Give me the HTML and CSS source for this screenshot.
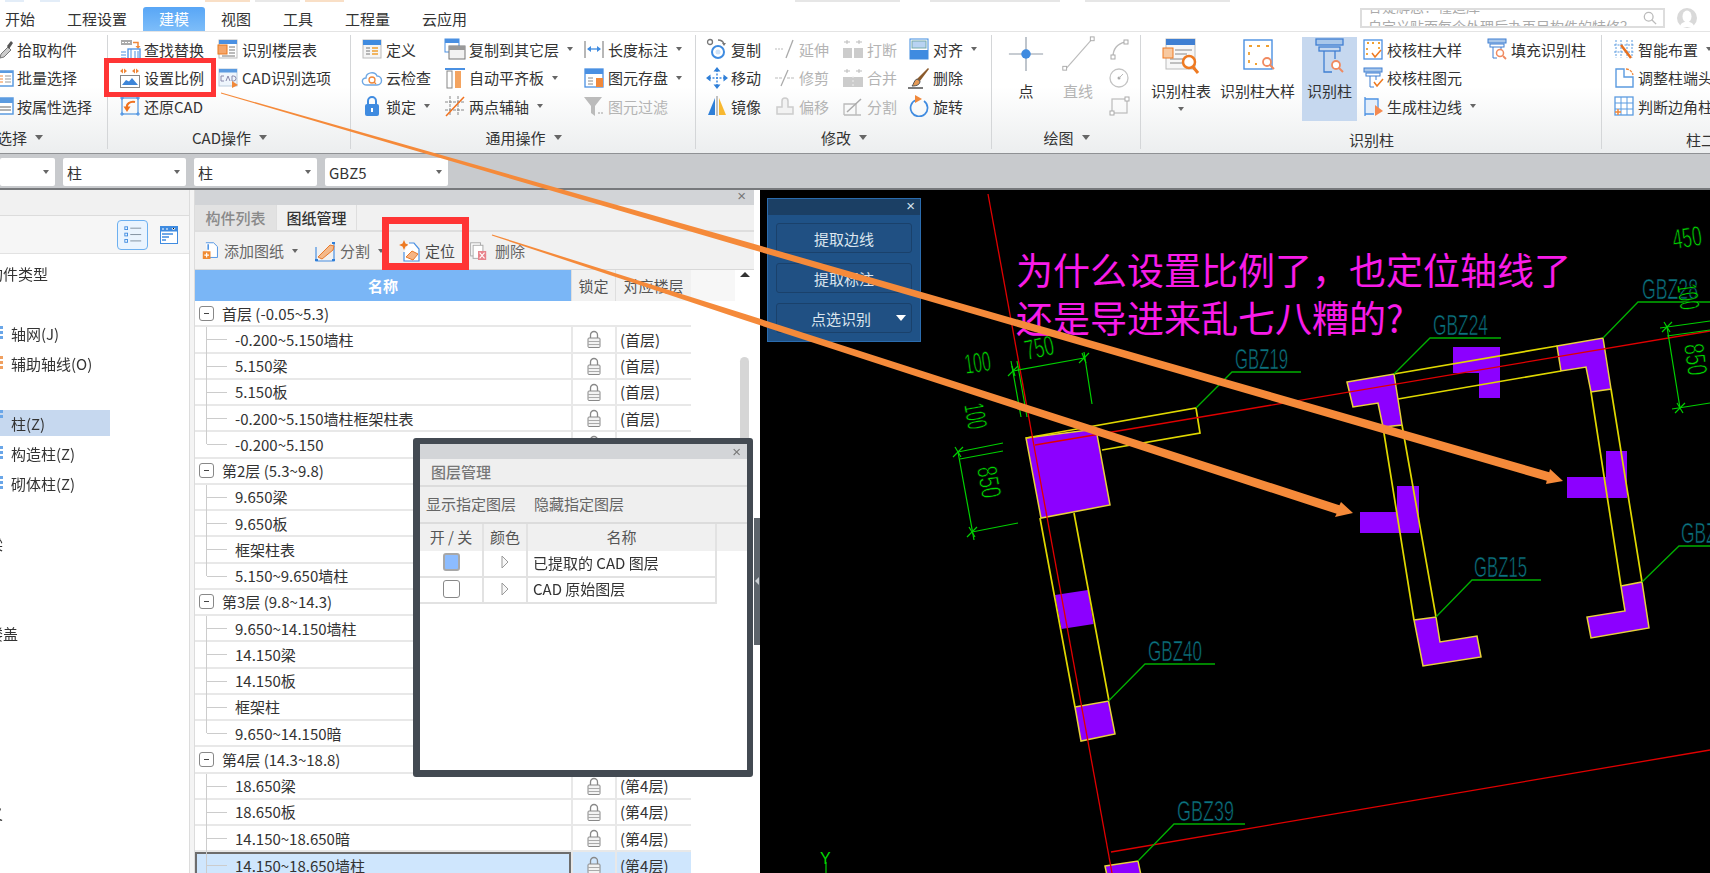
FILE: index.html
```html
<!DOCTYPE html>
<html lang="zh-CN">
<head>
<meta charset="utf-8">
<title>图纸管理</title>
<link rel="stylesheet" href="styles.css">
</head>
<body>
<svg class="sprite" width="0" height="0" aria-hidden="true">
  <defs>
    <symbol id="pick" viewBox="0 0 22 22"><path d="M8 20l1-4 7-7 3 3-7 7z" fill="#ccc" stroke="#777"/><path d="M15 8l4-5 2 2-4 6z" fill="#555"/></symbol>
    <symbol id="batch" viewBox="0 0 22 22"><rect x="5" y="4" width="16" height="15" fill="#fff" stroke="#5b9be0" stroke-width="1.5"/><path d="M5 5h16" stroke="#5b9be0" stroke-width="2"/><path d="M8 9h3M8 12h3M8 15h3" stroke="#f0883a"/><path d="M13 9h6M13 12h6M13 15h6" stroke="#999"/></symbol>
    <symbol id="attr" viewBox="0 0 22 22"><rect x="5" y="3" width="16" height="16" fill="#fff" stroke="#5b9be0" stroke-width="1.5"/><rect x="5" y="3" width="16" height="5" fill="#5b9be0"/><path d="M7 12h12M7 15h12" stroke="#999" stroke-width="1.5"/></symbol>
    <symbol id="find" viewBox="0 0 22 22"><rect x="2" y="2" width="11" height="5" fill="#aaa"/><path d="M3 4.500h9" stroke="#fff" stroke-dasharray="2 1"/><path d="M14 4.500h5v4" fill="none" stroke="#f0883a" stroke-width="1.500"/><path d="M16.500 8h5L19 11z" fill="#f0883a"/><rect x="9" y="11" width="12" height="10" fill="#fff" stroke="#4a90e2" stroke-width="1.300"/><path d="M2 14h5M2 17h5M2 20h5M12 11v10M16 13v7M19 13v7" stroke="#4a90e2"/></symbol>
    <symbol id="scale" viewBox="0 0 22 22"><path d="M1 4l3-2.500v5zM8 4L5 1.500v5zM13 4l3-2.500v5zM20 4l-3-2.500v5z" fill="#f0883a"/><rect x="1.500" y="8.500" width="19" height="12" fill="#fff" stroke="#888"/><path d="M3 18l4-5 3 1.500 3-3.500 6 7z" fill="#3d85d8"/></symbol>
    <symbol id="restore" viewBox="0 0 22 22"><rect x="3" y="3" width="16" height="16" fill="none" stroke="#5b9be0" stroke-width="1.300"/><path d="M1 3h4M3 1v4M17 3h4M19 1v4M1 19h4M3 17v4M17 19h4M19 17v4" stroke="#4a90e2"/><path d="M16 7c-5-1-9 2-8 6" fill="none" stroke="#f0711e" stroke-width="2"/><path d="M4.500 11.500h7L8 17z" fill="#f0711e"/></symbol>
    <symbol id="floor" viewBox="0 0 22 22"><rect x="2" y="2" width="18" height="18" fill="#fff" stroke="#bbb"/><rect x="2" y="2" width="18" height="4" fill="#4a90e2"/><rect x="1" y="7" width="9" height="9" fill="#f5a66a" stroke="#e8791f"/><path d="M12 9h6M12 12h6M12 15h6M5 18h13" stroke="#777"/></symbol>
    <symbol id="cadopt" viewBox="0 0 22 22"><rect x="2" y="2" width="18" height="17" fill="#eef5fc" stroke="#bcd"/><rect x="2" y="2" width="18" height="3.500" fill="#5b9be0"/><path d="M4 9h3M4 9v5h3M9 14l2-5 2 5M15 9v5h1.500a2.500 2.500 0 0 0 0-5z" fill="none" stroke="#88a"/><path d="M15 14l6 4-6 3z" fill="#f0883a"/></symbol>
    <symbol id="define" viewBox="0 0 22 22"><rect x="2" y="2" width="18" height="18" fill="#f5f5f5" stroke="#bbb"/><rect x="2" y="2" width="18" height="5" fill="#3f8be0"/><path d="M5 10h4M5 13h4M5 16h4" stroke="#777"/><path d="M11 10h6M11 13h6M11 16h6" stroke="#f0a030" stroke-width="1.500"/></symbol>
    <symbol id="cloud" viewBox="0 0 22 22"><path d="M6 18c-6 0-6-7-1-7 0-6 9-7 11-2 6 0 6 9 0 9z" fill="#fff" stroke="#6fa8e4" stroke-width="1.400"/><circle cx="11" cy="13" r="3" fill="none" stroke="#f0883a" stroke-width="1.300"/><path d="M13 15l2 2" stroke="#f0883a" stroke-width="1.300"/></symbol>
    <symbol id="lockb" viewBox="0 0 22 22"><path d="M7 10V6a4 4 0 0 1 8 0v4" fill="none" stroke="#3f8be0" stroke-width="2"/><rect x="4" y="9" width="14" height="12" rx="2" fill="#3f8be0"/><rect x="10" y="13" width="2" height="4" fill="#fff"/></symbol>
    <symbol id="copyf" viewBox="0 0 22 22"><rect x="1" y="1" width="14" height="13" fill="#fff" stroke="#4a90e2"/><rect x="1" y="1" width="14" height="4" fill="#4a90e2"/><rect x="5" y="8" width="16" height="13" fill="#f2f2f2" stroke="#777"/><rect x="5" y="8" width="16" height="4" fill="#999"/></symbol>
    <symbol id="alignp" viewBox="0 0 22 22"><path d="M1 2h20" stroke="#4a90e2" stroke-width="2"/><rect x="3" y="4" width="5" height="17" fill="#fff" stroke="#888"/><rect x="11" y="4" width="6" height="17" fill="#f4a460"/></symbol>
    <symbol id="twop" viewBox="0 0 22 22"><path d="M6 1v20M14 1v20M1 7h20M1 15h20" stroke="#888" stroke-dasharray="3 1"/><path d="M2 21L20 2" stroke="#f0711e" stroke-width="1.500"/></symbol>
    <symbol id="dimi" viewBox="0 0 22 22"><path d="M2 3v17M20 3v17" stroke="#888" stroke-width="1.200"/><path d="M5 11h12" stroke="#3f8be0" stroke-width="1.300"/><path d="M4 11l4-3v6zM18 11l-4-3v6z" fill="#3f8be0"/></symbol>
    <symbol id="savei" viewBox="0 0 22 22"><rect x="2" y="2" width="18" height="18" fill="#fff" stroke="#4a90e2" stroke-width="1.300"/><rect x="2" y="2" width="18" height="5" fill="#4a90e2"/><path d="M5 11h5M5 14h5M5 17h5" stroke="#888"/><rect x="13" y="11" width="7" height="9" fill="#f0883a"/></symbol>
    <symbol id="filter" viewBox="0 0 22 22"><path d="M1 2h18l-7 9v10l-4-3v-7z" fill="#bbb"/><path d="M15 18h2M18 18h2" stroke="#ccc" stroke-width="2"/></symbol>
    <symbol id="copy" viewBox="0 0 22 22"><circle cx="4" cy="4" r="2.500" fill="none" stroke="#777" stroke-width="1.300"/><path d="M12 2c3 0 5 1 6 4" fill="none" stroke="#777" stroke-width="1.300"/><path d="M16 5l4 0-2 3z" fill="#777"/><circle cx="12" cy="14" r="6" fill="none" stroke="#3f8be0" stroke-width="2"/><circle cx="12" cy="14" r="2.500" fill="#cfe2f7"/></symbol>
    <symbol id="move" viewBox="0 0 22 22"><path d="M11 3v16M3 11h16" stroke="#3f8be0" stroke-width="1.500" stroke-dasharray="2 1.500"/><path d="M11 0l-3.500 4.500h7zM11 22l-3.500-4.500h7zM0 11l4.500-3.500v7zM22 11l-4.500-3.500v7z" fill="#2f7fd8"/></symbol>
    <symbol id="mirror" viewBox="0 0 22 22"><path d="M9 3L2 20h7z" fill="#2f7fd8"/><path d="M13 3l7 17h-7z" fill="#f8b830"/><path d="M11 1v20" stroke="#888"/></symbol>
    <symbol id="extend" viewBox="0 0 22 22"><path d="M1 11h8" stroke="#bbb" stroke-dasharray="2 1"/><path d="M12 20L19 2" stroke="#aaa" stroke-width="1.300"/></symbol>
    <symbol id="trim" viewBox="0 0 22 22"><path d="M1 11h8M13 11h8" stroke="#bbb" stroke-dasharray="3 1"/><path d="M7 19L14 3" stroke="#aaa" stroke-width="1.300"/></symbol>
    <symbol id="offset" viewBox="0 0 22 22"><path d="M8 12V6a3 3 0 0 1 6 0v6h5v7H3v-7z" fill="#f2f2f2" stroke="#ccc" stroke-width="1.500"/></symbol>
    <symbol id="breaki" viewBox="0 0 22 22"><path d="M5 2v4M2 4h6M17 2v4M14 4h6" stroke="#bbb"/><rect x="1" y="10" width="9" height="10" fill="#ccc"/><rect x="12" y="10" width="9" height="10" fill="#ccc"/></symbol>
    <symbol id="merge" viewBox="0 0 22 22"><path d="M5 2v4M2 4h6M17 2v4M14 4h6" stroke="#bbb"/><rect x="1" y="10" width="20" height="10" fill="#ccc"/><path d="M11 9v12" stroke="#eee" stroke-dasharray="2 2"/></symbol>
    <symbol id="splitg" viewBox="0 0 22 22"><path d="M2 20h17M2 20V9h12v11" fill="none" stroke="#bbb" stroke-width="1.300"/><path d="M5 17L19 4" stroke="#aaa" stroke-width="1.500"/></symbol>
    <symbol id="alignr" viewBox="0 0 22 22"><rect x="2" y="1" width="18" height="20" fill="#fff" stroke="#3f8be0"/><rect x="4" y="3" width="14" height="7" fill="#b8d3f2" stroke="#7aa"/><rect x="2" y="12" width="18" height="9" fill="#3f8be0"/></symbol>
    <symbol id="erase" viewBox="0 0 22 22"><path d="M20 1l1 1-9 12-3-2z" fill="#8b5a2b"/><path d="M9 12l3 2c0 3-2 5-8 5 2-2 2-6 5-7z" fill="#e69a55" stroke="#555"/><path d="M0 21h15" stroke="#333" stroke-width="1.300"/></symbol>
    <symbol id="rotate" viewBox="0 0 22 22"><path d="M8 5a8.500 8.500 0 1 0 8 1" fill="none" stroke="#3f8be0" stroke-width="1.700"/><path d="M7 0l7 4-7 4z" fill="#f0883a"/></symbol>
    <symbol id="ptbig" viewBox="0 0 40 40"><path d="M20 2v36M2 20h36" stroke="#8f9aa6" stroke-width="1.200"/><circle cx="20" cy="20" r="5" fill="#3f8be0"/></symbol>
    <symbol id="lnbig" viewBox="0 0 40 40"><path d="M7 36L35 4" stroke="#bbb" stroke-width="1.200"/><rect x="4" y="33" width="4" height="4" fill="#fff" stroke="#aaa"/><rect x="33" y="2" width="4" height="4" fill="#fff" stroke="#aaa"/></symbol>
    <symbol id="arc" viewBox="0 0 22 22"><path d="M5 19C5 11 9 6 17 4" fill="none" stroke="#bbb" stroke-width="1.300"/><rect x="3" y="17" width="4" height="4" fill="#fff" stroke="#aaa"/><rect x="16" y="2" width="4" height="4" fill="#fff" stroke="#aaa"/></symbol>
    <symbol id="circ" viewBox="0 0 22 22"><circle cx="11" cy="11" r="9" fill="none" stroke="#c4c4c4" stroke-width="1.300"/><circle cx="11" cy="11" r="1.500" fill="#aaa"/><path d="M11 11l4-4" stroke="#bbb"/></symbol>
    <symbol id="rc" viewBox="0 0 22 22"><rect x="4" y="4" width="15" height="14" fill="none" stroke="#bbb" stroke-width="1.200"/><rect x="2" y="16" width="4" height="4" fill="#fff" stroke="#aaa"/><rect x="17" y="2" width="4" height="4" fill="#fff" stroke="#aaa"/></symbol>
    <symbol id="cbtable" viewBox="0 0 40 36"><rect x="5" y="1" width="29" height="30" fill="#f7f7f7" stroke="#bbb"/><rect x="5" y="1" width="29" height="6" fill="#3f7fd2"/><path d="M14 12h17M14 16h12M9 21h13M9 25h12" stroke="#888"/><rect x="2" y="10" width="10" height="10" fill="#f8c9a0" stroke="#ee7a22"/><circle cx="28" cy="24" r="6" fill="#fff" stroke="#ee7a22" stroke-width="2.500"/><path d="M32 29l5 6" stroke="#ee7a22" stroke-width="3"/></symbol>
    <symbol id="cbdetail" viewBox="0 0 40 36"><rect x="6" y="2" width="28" height="29" fill="#fff" stroke="#4a90e2" stroke-width="1.400"/><path d="M11 8h3M19 8h3M28 8h3M11 14v3M11 22v3M17 26h2" stroke="#f0a030" stroke-width="1.800"/><circle cx="29" cy="24" r="4" fill="#fff" stroke="#f08a60" stroke-width="1.800"/><path d="M32 27l4 4" stroke="#f08a60" stroke-width="2"/></symbol>
    <symbol id="cbcol" viewBox="0 0 40 36"><rect x="6" y="1" width="27" height="6" fill="#a9c7ea" stroke="#3f7fd2" stroke-width="1.300"/><rect x="9" y="9" width="21" height="4" fill="none" stroke="#3f7fd2" stroke-width="1.300"/><path d="M14 13v21h8" fill="none" stroke="#3f7fd2" stroke-width="1.300"/><path d="M25 13v8" stroke="#3f7fd2" stroke-width="1.300"/><circle cx="26" cy="27" r="4" fill="#fff" stroke="#f08a60" stroke-width="1.800"/><path d="M29 30l4 4" stroke="#f08a60" stroke-width="2"/></symbol>
    <symbol id="chkd" viewBox="0 0 22 22"><rect x="2" y="2" width="18" height="19" fill="#fff" stroke="#4a90e2" stroke-width="1.300"/><path d="M5 5h2M10 5h2M16 5h2M5 10v2M17 9v2M5 15v2" stroke="#f0a030" stroke-width="1.800"/><path d="M10 15l3 4 6-7" fill="none" stroke="#ee7a22" stroke-width="1.500"/></symbol>
    <symbol id="chkc" viewBox="0 0 22 22"><rect x="2" y="1" width="18" height="4" fill="#a9c7ea" stroke="#3f7fd2"/><rect x="4" y="6" width="14" height="3" fill="none" stroke="#3f7fd2"/><path d="M8 9v11h4M14 9v4" fill="none" stroke="#3f7fd2"/><path d="M12 15l3 4 6-7" fill="none" stroke="#ee7a22" stroke-width="1.500"/></symbol>
    <symbol id="gen" viewBox="0 0 22 22"><path d="M3 2v19M3 4h13v9M3 19h9" fill="none" stroke="#4a90e2" stroke-width="1.300"/><rect x="4" y="5" width="11" height="13" fill="#e4eefa"/><path d="M13 10l8 6-8 5z" fill="#f58a50"/></symbol>
    <symbol id="fillc" viewBox="0 0 22 22"><rect x="2" y="1" width="18" height="4" fill="#a9c7ea" stroke="#3f7fd2"/><rect x="4" y="6" width="14" height="3" fill="none" stroke="#3f7fd2"/><path d="M7 9v11h4M15 9v3" fill="none" stroke="#3f7fd2"/><circle cx="14" cy="15" r="3.500" fill="#fff" stroke="#f08a60" stroke-width="1.500"/><path d="M17 18l3 3" stroke="#f08a60" stroke-width="1.800"/></symbol>
    <symbol id="smart" viewBox="0 0 22 22"><path d="M3 2v18M8 2v18M14 2v18M19 2v18M1 7h20M1 14h20" stroke="#5b9be0" stroke-dasharray="2 1.500"/><path d="M8 7l10 13" stroke="#e8701f" stroke-width="2.500"/></symbol>
    <symbol id="adjust" viewBox="0 0 22 22"><path d="M3 2v18h17V10h-9V2z" fill="#fff" stroke="#5b9be0" stroke-width="1.400"/><path d="M13 2c3 0 6 2 7 6" fill="none" stroke="#f0883a" stroke-width="1.300" stroke-dasharray="3 1"/></symbol>
    <symbol id="corner" viewBox="0 0 22 22"><rect x="2" y="2" width="18" height="18" fill="#fff" stroke="#5b9be0" stroke-width="1.300"/><path d="M8 2v18M14 2v18M2 8h18M2 14h18" stroke="#5b9be0"/><path d="M2 17h6M5 14v6" stroke="#f0883a" stroke-width="1.500"/></symbol>
    <symbol id="adddoc" viewBox="0 0 22 22"><path d="M5 1h10l5 5v14H8" fill="#fff" stroke="#4a90e2" stroke-width="1.200"/><path d="M8 3v7" stroke="#4a90e2" stroke-width="2"/><rect x="1" y="12" width="10" height="10" fill="#f08a30"/><path d="M6 14v6M3 17h6" stroke="#fff" stroke-width="1.500"/></symbol>
    <symbol id="splitd" viewBox="0 0 22 22"><path d="M2 7v14h18V4" fill="none" stroke="#4a90e2" stroke-width="1.200"/><path d="M4 17L16 5l4 1-1 4-11 9z" fill="#f4b98a" stroke="#e8792a"/><path d="M1 20h3M18 20h3M18 3h3" stroke="#2f7fd8" stroke-width="2"/></symbol>
    <symbol id="locate" viewBox="0 0 22 22"><path d="M5 0l1.500 3.500L10 5 6.500 6.500 5 10 3.500 6.500 0 5l3.500-1.500z" fill="#ee7a22"/><path d="M10 3h5l5 6v12H5v-9" fill="#fff" stroke="#4a90e2" stroke-width="1.200"/><path d="M7 17l6-6 6 3-5 6z" fill="#f6b484" stroke="#e8792a"/></symbol>
    <symbol id="deld" viewBox="0 0 22 22"><rect x="2" y="1" width="12" height="16" fill="#fff" stroke="#aaa" stroke-width="1.200"/><rect x="5" y="4" width="12" height="16" fill="#fff" stroke="#aaa" stroke-width="1.200"/><rect x="11" y="11" width="10" height="11" fill="#e8848c"/><path d="M13 13l6 7M19 13l-6 7" stroke="#fff" stroke-width="1.300"/></symbol>
    <symbol id="lock" viewBox="0 0 14 18"><path d="M3.500 8V5a3.500 3.500 0 0 1 7 0v3" fill="none" stroke="#888" stroke-width="1.300"/><rect x="1" y="8" width="12" height="9.500" rx="1" fill="#f2f2f2" stroke="#888"/><path d="M1 11.500h12M1 14.500h12" stroke="#aaa"/></symbol>
    <symbol id="listi" viewBox="0 0 22 22"><rect x="2" y="2" width="3" height="3" fill="none" stroke="#3f8be0"/><rect x="2" y="9" width="3" height="3" fill="none" stroke="#3f8be0"/><rect x="2" y="16" width="3" height="3" fill="none" stroke="#3f8be0"/><path d="M8 3.500h12M8 10.500h12M8 17.500h12" stroke="#7a8a99"/></symbol>
    <symbol id="gridi" viewBox="0 0 18 18"><rect x="0.500" y="0.500" width="17" height="17" fill="#fff" stroke="#3f8be0"/><rect x="0.500" y="0.500" width="17" height="5" fill="#3f8be0"/><path d="M3 2v2M7 2v2M12 2l1.500 2L15 2" stroke="#fff"/><path d="M2 8h11M2 11h7M2 14h4" stroke="#3f8be0" stroke-width="1.300"/></symbol>
    <symbol id="tri" viewBox="0 0 8 14"><path d="M1 1l6 6-6 6z" fill="#f8f8f8" stroke="#999"/></symbol>
    <symbol id="mag" viewBox="0 0 16 16"><circle cx="6.500" cy="6.500" r="5" fill="none" stroke="#bbb" stroke-width="1.500"/><path d="M10 10l5 5" stroke="#bbb" stroke-width="1.500"/></symbol>
    <symbol id="user" viewBox="0 0 20 20"><circle cx="10" cy="10" r="10" fill="#d9d9d9"/><ellipse cx="10" cy="8.500" rx="4.500" ry="6" fill="#fff"/><path d="M3 19c1-5 4-5 7-5s6 0 7 5z" fill="#fff"/></symbol>
  </defs>
</svg>

<div class="app">
  <div class="titlebar">
    <div class="tabs">
      <span class="tab">开始</span>
      <span class="tab">工程设置</span>
      <span class="tab active">建模</span>
      <span class="tab">视图</span>
      <span class="tab">工具</span>
      <span class="tab">工程量</span>
      <span class="tab">云应用</span>
    </div>
    <div class="search">
      <div class="search-text">
        <div>答疑解惑！懂造库</div>
        <div>自定义贴面每个处理后办再目构件的特修？</div>
      </div>
      <svg class="mag"><use href="#mag"/></svg>
    </div>
    <svg class="avatar"><use href="#user"/></svg>
  </div>

  <div class="ribbon">
    <section class="group g1">
      <div class="gbody">
        <div class="ri"><svg><use href="#pick"/></svg>拾取构件</div>
        <div class="ri"><svg><use href="#batch"/></svg>批量选择</div>
        <div class="ri"><svg><use href="#attr"/></svg>按属性选择</div>
      </div>
      <div class="glabel">选择<i class="caret"></i></div>
    </section>
    <section class="group g2">
      <div class="gbody">
        <div class="ri"><svg><use href="#find"/></svg>查找替换</div>
        <div class="ri"><svg><use href="#scale"/></svg>设置比例</div>
        <div class="ri"><svg><use href="#restore"/></svg>还原CAD</div>
        <div class="ri"><svg><use href="#floor"/></svg>识别楼层表</div>
        <div class="ri"><svg><use href="#cadopt"/></svg>CAD识别选项</div>
      </div>
      <div class="glabel">CAD操作<i class="caret"></i></div>
    </section>
    <section class="group g3">
      <div class="gbody">
        <div class="ri"><svg><use href="#define"/></svg>定义</div>
        <div class="ri"><svg><use href="#cloud"/></svg>云检查</div>
        <div class="ri"><svg><use href="#lockb"/></svg>锁定<i class="caret"></i></div>
        <div class="ri"><svg><use href="#copyf"/></svg>复制到其它层<i class="caret"></i></div>
        <div class="ri"><svg><use href="#alignp"/></svg>自动平齐板<i class="caret"></i></div>
        <div class="ri"><svg><use href="#twop"/></svg>两点辅轴<i class="caret"></i></div>
        <div class="ri"><svg><use href="#dimi"/></svg>长度标注<i class="caret"></i></div>
        <div class="ri"><svg><use href="#savei"/></svg>图元存盘<i class="caret"></i></div>
        <div class="ri off"><svg><use href="#filter"/></svg>图元过滤</div>
      </div>
      <div class="glabel">通用操作<i class="caret"></i></div>
    </section>
    <section class="group g4">
      <div class="gbody">
        <div class="ri"><svg><use href="#copy"/></svg>复制</div>
        <div class="ri"><svg><use href="#move"/></svg>移动</div>
        <div class="ri"><svg><use href="#mirror"/></svg>镜像</div>
        <div class="ri off"><svg><use href="#extend"/></svg>延伸</div>
        <div class="ri off"><svg><use href="#trim"/></svg>修剪</div>
        <div class="ri off"><svg><use href="#offset"/></svg>偏移</div>
        <div class="ri off"><svg><use href="#breaki"/></svg>打断</div>
        <div class="ri off"><svg><use href="#merge"/></svg>合并</div>
        <div class="ri off"><svg><use href="#splitg"/></svg>分割</div>
        <div class="ri"><svg><use href="#alignr"/></svg>对齐<i class="caret"></i></div>
        <div class="ri"><svg><use href="#erase"/></svg>删除</div>
        <div class="ri"><svg><use href="#rotate"/></svg>旋转</div>
      </div>
      <div class="glabel">修改<i class="caret"></i></div>
    </section>
    <section class="group g5">
      <div class="gbody">
        <div class="big"><svg class="draw-ico"><use href="#ptbig"/></svg><span>点</span></div>
        <div class="big off"><svg class="draw-ico"><use href="#lnbig"/></svg><span>直线</span></div>
        <div class="ri solo"><svg><use href="#arc"/></svg></div>
        <div class="ri solo"><svg><use href="#circ"/></svg></div>
        <div class="ri solo"><svg><use href="#rc"/></svg></div>
      </div>
      <div class="glabel">绘图<i class="caret"></i></div>
    </section>
    <section class="group g6">
      <div class="gbody">
        <div class="big"><svg class="col-ico"><use href="#cbtable"/></svg><span>识别柱表</span><i class="caret center"></i></div>
        <div class="big"><svg class="col-ico"><use href="#cbdetail"/></svg><span>识别柱大样</span></div>
        <div class="big sel-block"><svg class="col-ico"><use href="#cbcol"/></svg><span>识别柱</span></div>
        <div class="ri"><svg><use href="#chkd"/></svg>校核柱大样</div>
        <div class="ri"><svg><use href="#chkc"/></svg>校核柱图元</div>
        <div class="ri"><svg><use href="#gen"/></svg>生成柱边线<i class="caret"></i></div>
        <div class="ri"><svg><use href="#fillc"/></svg>填充识别柱</div>
      </div>
      <div class="glabel low">识别柱</div>
    </section>
    <section class="group g7">
      <div class="gbody">
        <div class="ri"><svg><use href="#smart"/></svg>智能布置<i class="caret"></i></div>
        <div class="ri"><svg><use href="#adjust"/></svg>调整柱端头</div>
        <div class="ri"><svg><use href="#corner"/></svg>判断边角柱</div>
      </div>
      <div class="glabel low">柱二次编辑</div>
    </section>
  </div>

  <div class="selbar">
    <div class="sel first"><i class="caret"></i></div>
    <div class="sel"><span>柱</span><i class="caret"></i></div>
    <div class="sel"><span>柱</span><i class="caret"></i></div>
    <div class="sel"><span>GBZ5</span><i class="caret"></i></div>
  </div>

  <div class="main">
    <aside class="nav">
      <div class="nav-head"></div>
      <div class="nav-tools">
        <span class="view-btn"><svg><use href="#listi"/></svg></span>
        <svg class="grid-btn"><use href="#gridi"/></svg>
      </div>
      <div class="nav-list">
        <div class="nr clip-a">构件类型</div>
        <div class="nr"></div>
        <div class="nr"><i class="sliver blue"></i>轴网(J)</div>
        <div class="nr"><i class="sliver orange"></i>辅助轴线(O)</div>
        <div class="nr"></div>
        <div class="nr"><span class="nr-sel"><i class="sliver blue"></i>柱(Z)</span></div>
        <div class="nr"><i class="sliver blue"></i>构造柱(Z)</div>
        <div class="nr"><i class="sliver blue"></i>砌体柱(Z)</div>
        <div class="nr"></div>
        <div class="nr clip-b">圈梁</div>
        <div class="nr"></div>
        <div class="nr"></div>
        <div class="nr clip-a">楼盖</div>
        <div class="nr"></div>
        <div class="nr"></div>
        <div class="nr"></div>
        <div class="nr"></div>
        <div class="nr"></div>
        <div class="nr clip-a">义</div>
      </div>
    </aside>
    <div class="split"></div>
    <div class="mid">
      <div class="mid-head"><span class="x">×</span></div>
      <div class="mid-tabs">
        <span class="mtab">构件列表</span>
        <span class="mtab on">图纸管理</span>
      </div>
      <div class="mid-tools">
        <span class="mt t-add"><svg><use href="#adddoc"/></svg>添加图纸<i class="caret"></i></span>
        <span class="mt t-split"><svg><use href="#splitd"/></svg>分割<i class="caret"></i></span>
        <span class="mt t-loc"><svg><use href="#locate"/></svg>定位</span>
        <span class="mt t-del"><svg><use href="#deld"/></svg>删除</span>
      </div>
      <div class="thead">
        <span class="th name">名称</span>
        <span class="th">锁定</span>
        <span class="th">对应楼层</span>
        <span class="th blank"></span>
      </div>
      <div class="tbody">
        <div class="tr head"><span class="minus"></span>首层 (-0.05~5.3)</div>
        <div class="tr"><span class="c nm">-0.200~5.150墙柱</span><span class="c lk"><svg><use href="#lock"/></svg></span><span class="c fl">(首层)</span></div>
        <div class="tr"><span class="c nm">5.150梁</span><span class="c lk"><svg><use href="#lock"/></svg></span><span class="c fl">(首层)</span></div>
        <div class="tr"><span class="c nm">5.150板</span><span class="c lk"><svg><use href="#lock"/></svg></span><span class="c fl">(首层)</span></div>
        <div class="tr"><span class="c nm">-0.200~5.150墙柱框架柱表</span><span class="c lk"><svg><use href="#lock"/></svg></span><span class="c fl">(首层)</span></div>
        <div class="tr"><span class="c nm last">-0.200~5.150</span><span class="c lk"><svg><use href="#lock"/></svg></span><span class="c fl">(首层)</span></div>
        <div class="tr head"><span class="minus"></span>第2层 (5.3~9.8)</div>
        <div class="tr"><span class="c nm">9.650梁</span><span class="c lk"><svg><use href="#lock"/></svg></span><span class="c fl">(第2层)</span></div>
        <div class="tr"><span class="c nm">9.650板</span><span class="c lk"><svg><use href="#lock"/></svg></span><span class="c fl">(第2层)</span></div>
        <div class="tr"><span class="c nm">框架柱表</span><span class="c lk"><svg><use href="#lock"/></svg></span><span class="c fl">(第2层)</span></div>
        <div class="tr"><span class="c nm last">5.150~9.650墙柱</span><span class="c lk"><svg><use href="#lock"/></svg></span><span class="c fl">(第2层)</span></div>
        <div class="tr head"><span class="minus"></span>第3层 (9.8~14.3)</div>
        <div class="tr"><span class="c nm">9.650~14.150墙柱</span><span class="c lk"><svg><use href="#lock"/></svg></span><span class="c fl">(第3层)</span></div>
        <div class="tr"><span class="c nm">14.150梁</span><span class="c lk"><svg><use href="#lock"/></svg></span><span class="c fl">(第3层)</span></div>
        <div class="tr"><span class="c nm">14.150板</span><span class="c lk"><svg><use href="#lock"/></svg></span><span class="c fl">(第3层)</span></div>
        <div class="tr"><span class="c nm">框架柱</span><span class="c lk"><svg><use href="#lock"/></svg></span><span class="c fl">(第3层)</span></div>
        <div class="tr"><span class="c nm last">9.650~14.150暗</span><span class="c lk"><svg><use href="#lock"/></svg></span><span class="c fl">(第3层)</span></div>
        <div class="tr head"><span class="minus"></span>第4层 (14.3~18.8)</div>
        <div class="tr"><span class="c nm">18.650梁</span><span class="c lk"><svg><use href="#lock"/></svg></span><span class="c fl">(第4层)</span></div>
        <div class="tr"><span class="c nm">18.650板</span><span class="c lk"><svg><use href="#lock"/></svg></span><span class="c fl">(第4层)</span></div>
        <div class="tr"><span class="c nm">14.150~18.650暗</span><span class="c lk"><svg><use href="#lock"/></svg></span><span class="c fl">(第4层)</span></div>
        <div class="tr selected"><span class="c nm">14.150~18.650墙柱</span><span class="c lk"><svg><use href="#lock"/></svg></span><span class="c fl">(第4层)</span></div>
      </div>
      <i class="sb-up"></i>
      <i class="sb-thumb"></i>
    </div>

    <div class="canvas">
      <svg class="cad" viewBox="760 190 950 683" width="950" height="683" aria-label="CAD 图纸">
        <g fill="#8c00ff">
          <path d="M1453 347H1500V398H1479V373H1453Z"/>
          <path d="M1606 451H1627V498H1567V477H1606Z"/>
          <path d="M1397 486H1419V533H1360V512H1397Z"/>
          <path d="M1055 595L1088 590L1093.500 624L1061.500 629Z"/>
        </g>
        <g fill="#8c00ff" stroke="#e8d23a" stroke-width="1.500">
          <path d="M1026 438L1096 429L1110 505L1041 518Z"/>
          <path d="M1075 707L1108.500 701L1115 734L1081 741Z"/>
          <path d="M1105 866L1138 861L1142 880H1108Z"/>
          <path d="M1347 382L1394 374L1402 425L1383 427L1378 403L1353 407Z"/>
          <path d="M1557 346L1603 338L1611 389L1591 392L1586 367L1561 371Z"/>
          <path d="M1414 620L1436 617L1440 642L1477 636L1481 657L1423 666Z"/>
          <path d="M1621 586L1642 582L1649 628L1591 638L1587 617L1625 611Z"/>
        </g>
        <g fill="none" stroke="#e0d800" stroke-width="1.700">
          <path d="M1026 438L1196 408L1200 433L1102 450"/>
          <path d="M1040 518L1075 707M1074 513L1109 701"/>
          <path d="M1394 374L1557 346M1398 399L1561 371"/>
          <path d="M1383 427L1414 620M1402 425L1436 617"/>
          <path d="M1591 392L1621 586M1611 389L1642 582"/>
        </g>
        <g fill="none" stroke="#e00000" stroke-width="1.300">
          <path d="M988 194L1112 873"/>
          <path d="M1035 445L1710 331"/>
          <path d="M1111 852L1710 750"/>
        </g>
        <g fill="none" stroke="#00b000" stroke-width="1.300">
          <path d="M1196 408L1232 372H1301"/>
          <path d="M1394 374L1430 338H1501"/>
          <path d="M1603 338L1638 302H1710"/>
          <path d="M1108.500 701L1145 664H1215"/>
          <path d="M1436 617L1472 580H1541"/>
          <path d="M1642 582L1679 546H1710"/>
          <path d="M1138 861L1174 824H1245"/>
        </g>
        <g fill="none" stroke="#00d000" stroke-width="1.200">
          <path d="M1013 371L1084 358M1011 361L1021 417M1017 361L1027 417M1084 352L1092 404"/>
          <path d="M1008 376L1018 366M1012 366L1015 376M1079 363L1089 353M1082 353L1086 363"/>
          <path d="M958 452L974 540M958 452L1003 443M960 459L1003 451M972 532L1018 523"/>
          <path d="M953 457L963 447M955 447L961 457M967 537L977 527M969 527L975 537"/>
          <path d="M1667 327L1680 408M1660 328L1710 321M1667 336L1710 330M1672 409L1710 403"/>
          <path d="M1662 332L1672 322M1664 322L1670 332M1675 413L1685 403M1677 403L1683 413"/>
          <path d="M826 862L826 873"/>
        </g>
        <g class="lbl">
          <text x="1235" y="369" textLength="53" lengthAdjust="spacingAndGlyphs">GBZ19</text>
          <text x="1433" y="335" textLength="55" lengthAdjust="spacingAndGlyphs">GBZ24</text>
          <text x="1642" y="299" textLength="56" lengthAdjust="spacingAndGlyphs">GBZ28</text>
          <text x="1474" y="577" textLength="53" lengthAdjust="spacingAndGlyphs">GBZ15</text>
          <text x="1681" y="543" textLength="55" lengthAdjust="spacingAndGlyphs">GBZ26</text>
          <text x="1148" y="661" textLength="54" lengthAdjust="spacingAndGlyphs">GBZ40</text>
          <text x="1177" y="821" textLength="57" lengthAdjust="spacingAndGlyphs">GBZ39</text>
        </g>
        <g class="dim">
          <text transform="translate(966 374) rotate(-8)" textLength="26" lengthAdjust="spacingAndGlyphs">100</text>
          <text transform="translate(1027 360) rotate(-12)" textLength="29" lengthAdjust="spacingAndGlyphs">750</text>
          <text transform="translate(964 405) rotate(80)" textLength="26" lengthAdjust="spacingAndGlyphs">100</text>
          <text transform="translate(977 468) rotate(80)" textLength="32" lengthAdjust="spacingAndGlyphs">850</text>
          <text transform="translate(1674 249) rotate(-8)" textLength="29" lengthAdjust="spacingAndGlyphs">450</text>
          <text transform="translate(1677 285) rotate(82)" textLength="26" lengthAdjust="spacingAndGlyphs">100</text>
          <text transform="translate(1684 345) rotate(82)" textLength="32" lengthAdjust="spacingAndGlyphs">850</text>
          <text class="axis" x="820" y="864">Y</text>
        </g>
      </svg>
      <div class="float">
        <div class="float-head"><span>×</span></div>
        <div class="fbtn">提取边线</div>
        <div class="fbtn">提取标注</div>
        <div class="fbtn drop">点选识别<i class="caret white"></i></div>
      </div>
      <div class="note">为什么设置比例了，也定位轴线了<br>还是导进来乱七八糟的?</div>
    </div>

    <div class="dialog">
      <div class="dlg-head"><span class="x">×</span></div>
      <div class="dlg-title">图层管理</div>
      <div class="dlg-acts"><span>显示指定图层</span><span>隐藏指定图层</span></div>
      <div class="lt lhead"><span>开 / 关</span><span>颜色</span><span>名称</span></div>
      <div class="lt"><span><i class="cb on"></i></span><span><svg class="tri"><use href="#tri"/></svg></span><span class="ln">已提取的 CAD 图层</span></div>
      <div class="lt"><span><i class="cb"></i></span><span><svg class="tri"><use href="#tri"/></svg></span><span class="ln">CAD 原始图层</span></div>
    </div>
    <i class="handle"></i>
  </div>
</div>

<div class="hl hl-scale"></div>
<div class="hl hl-loc"></div>
<svg class="arrows" viewBox="0 0 1710 873" width="1710" height="873" aria-hidden="true">
  <path fill="#f58a3a" d="M221.100 92.500L752.600 243.500L1549.250 472.200L1550 469L1563 481L1546 484L1546.750 480.800L751 249.300L220.900 93.500Z"/>
  <path fill="#f58a3a" d="M492.200 234.500L746.700 314.500L1339.400 505.200L1341 502L1353 513L1335 517L1336.600 513.800L744.900 320.300L491.800 235.500Z"/>
</svg>
</body>
</html>
```

FILE: styles.css
```css
* { box-sizing: border-box; }
html, body { margin: 0; padding: 0; height: 100%; overflow: hidden; }
body {
  position: relative;
  width: 1710px;
  height: 873px;
  font-family: "Noto Sans CJK SC", "Noto Sans", sans-serif;
  font-size: 15px;
  color: #333;
  background: #fff;
}
i { font-style: normal; display: block; }
.sprite { position: absolute; }
.app { display: flex; flex-direction: column; width: 1710px; height: 873px; overflow: hidden; }

/* top strip: the window title is cropped to its last two rows */
.titlebar {
  height: 31px; display: flex; align-items: flex-end; flex: none;
  background-color: #fff;
  background-image: linear-gradient(90deg,
    transparent 5px, #e3edf8 5px, #e3edf8 24px, transparent 24px,
    transparent 40px, #e3edf8 40px, #e3edf8 60px, transparent 60px,
    transparent 205px, #f9dfc6 205px, #f9dfc6 250px, transparent 250px,
    transparent 255px, #e8e8e8 255px, #e8e8e8 300px, transparent 300px,
    transparent 305px, #f9dfc6 305px, #f9dfc6 344px, transparent 344px,
    transparent 795px, #e6e6e6 795px, #e6e6e6 900px, transparent 900px,
    transparent 930px, #e6e6e6 930px, #e6e6e6 1060px, transparent 1060px,
    transparent 1085px, #e6e6e6 1085px, #e6e6e6 1230px, transparent 1230px);
  background-size: 100% 2px;
  background-repeat: no-repeat;
}
.tabs { display: flex; margin-left: -11px; }
.tab { height: 24px; padding: 0 16px; line-height: 24px; white-space: nowrap; border-radius: 3px 3px 0 0; }
.tab.active { color: #fff; background: linear-gradient(#58a6f6, #7dbdf9); }
.search {
  position: relative; margin-left: auto; margin-bottom: 3px; width: 305px; height: 20px;
  border: 2px solid #ddd; overflow: hidden; background: #fff;
}
.search-text { margin-top: -14px; padding-left: 6px; line-height: 20px; font-size: 14px; color: #aaa; white-space: nowrap; }
.mag { position: absolute; right: 6px; top: 1px; width: 14px; height: 14px; }
.avatar { width: 20px; height: 20px; margin: 0 13px 3px 12px; }

/* ribbon */
.ribbon {
  height: 123px; flex: none; display: flex; overflow: hidden;
  border-top: 1px solid #e4e4e4; border-bottom: 1px solid #8f9194;
  background: linear-gradient(#fff 45%, #eceeef);
}
.group { flex: none; position: relative; display: flex; flex-direction: column; }
.group::after { content: ""; position: absolute; right: 0; top: 3px; bottom: 4px; width: 1px; background: #d4d6d8; }
.gbody { height: 89px; padding-top: 3px; display: grid; grid-auto-flow: column; grid-template-rows: repeat(3, 28.5px); }
.glabel { height: 32px; display: flex; align-items: center; justify-content: center; white-space: nowrap; }
.glabel .caret { border-left-width: 4.500px; border-right-width: 4.500px; border-top-width: 5px; }
.glabel.low { padding-top: 5px; }
.g1 { width: 108px; }
.g1 .gbody { margin-left: -8px; grid-template-columns: 116px; }
.g1 .glabel { justify-content: flex-start; margin-left: -3px; }
.g2 { width: 243px; }
.g2 .gbody { padding-left: 11px; grid-template-columns: 98px 120px; }
.g3 { width: 345px; }
.g3 .gbody { padding-left: 10px; grid-template-columns: 83px 139px 110px; }
.g4 { width: 296px; }
.g4 .gbody { padding-left: 10px; grid-template-columns: 68px 68px 66px 80px; }
.g5 { width: 149px; }
.g5 .gbody { grid-template-columns: 68px 36px 45px; }
.g6 { width: 461px; }
.g6 .gbody { padding-left: 10px; grid-template-columns: 60px 9px 75px 7px 55px 5px 124px 110px; }
.g7 { width: 108px; }
.g7::after { display: none; }
.g7 .gbody { padding-left: 11px; grid-template-columns: 200px; }
.g7 .glabel { justify-content: flex-start; padding-left: 84px; }

.ri { display: flex; align-items: center; white-space: nowrap; min-width: 0; }
.ri svg { width: 22px; height: 22px; margin-right: 3px; flex: none; }
.ri.off, .big.off { color: #b4b4b4; }
.ri.solo { justify-content: center; }
.ri.solo svg { margin: 0; }
.big { grid-row: 1 / 4; display: flex; flex-direction: column; align-items: center; white-space: nowrap; }
.big span { line-height: 20px; }
.draw-ico { width: 38px; height: 38px; margin-bottom: 8px; }
.col-ico { width: 40px; height: 36px; margin: 3px 0 7px; }
.g6 .big:nth-child(1) { grid-column: 1; }
.g6 .big:nth-child(2) { grid-column: 3; }
.g6 .big:nth-child(3) { grid-column: 5; }
.g6 .ri { grid-column: 7; }
.g6 .ri:last-child { grid-column: 8; grid-row: 1; }
.g6 .ri:nth-child(4) { grid-row: 1; }
.g6 .ri:nth-child(5) { grid-row: 2; }
.g6 .ri:nth-child(6) { grid-row: 3; }
.sel-block { background: #c6d8ef; margin-top: 2px; height: 84px; }
.sel-block .col-ico { margin-top: 1px; }

.caret { width: 0; height: 0; margin-left: 8px; border-left: 3.500px solid transparent; border-right: 3.500px solid transparent; border-top: 4px solid #666; flex: none; }
.caret.center { margin: 6px 0 0; }
.caret.white { border-top-color: #fff; border-left-width: 5px; border-right-width: 5px; border-top-width: 6px; }

/* select bar */
.selbar {
  height: 36px; flex: none; display: flex; gap: 8px; padding-top: 4px;
  background: #c8cacd; border-bottom: 2px solid #77797c;
}
.sel { width: 123px; height: 28px; background: #fff; display: flex; align-items: center; justify-content: space-between; padding: 0 6px 0 4px; border-radius: 2px; }
.sel.first { width: 55px; justify-content: flex-end; }
.sel .caret { margin: 0; }

/* main */
.main { flex: 1; display: flex; position: relative; min-height: 0; }
.nav { width: 190px; flex: none; background: #fff; border-right: 1px solid #dcdcdc; overflow: hidden; }
.nav-head { height: 26px; background: #f1f1f1; border-bottom: 1px solid #dcdcdc; }
.nav-tools { height: 38px; display: flex; align-items: center; justify-content: flex-end; padding-right: 11px; gap: 12px; background: #f6f6f6; border-bottom: 1px solid #e2e2e2; }
.view-btn { width: 31px; height: 30px; border: 1px solid #6db0f0; border-radius: 4px; background: #eaf4fe; display: flex; align-items: center; justify-content: center; }
.view-btn svg { width: 20px; height: 20px; }
.grid-btn { width: 18px; height: 18px; }
.nav-list { padding-top: 4px; }
.nr { height: 30px; position: relative; display: flex; align-items: center; padding-left: 11px; white-space: nowrap; }
.nr.clip-a { padding-left: 0; margin-left: -12px; }
.nr.clip-b { padding-left: 0; margin-left: -27px; }
.nr-sel { position: absolute; left: 0; top: 2px; width: 110px; height: 26px; display: flex; align-items: center; padding-left: 11px; background: #c6d8ef; }
.sliver { position: absolute; left: 0; top: 8px; width: 3px; height: 14px; }
.nr-sel .sliver { top: 0; height: 8px; }
.sliver.blue { background: repeating-linear-gradient(#6aa6e8 0 3px, transparent 3px 5px); }
.sliver.orange { background: repeating-linear-gradient(#f0a060 0 3px, transparent 3px 5px); }
.split { width: 5px; flex: none; background: #f4f4f4; border-right: 1px solid #dcdcdc; }

.mid { width: 559px; flex: none; position: relative; background: #fff; overflow: hidden; }
.mid-head { height: 15px; background: #d2d4d7; position: relative; }
.x { position: absolute; right: 8px; top: -3px; font: 15px/18px "Liberation Sans", sans-serif; color: #777; }
.mid-tabs { height: 27px; display: flex; background: #f1f1f1; border-bottom: 2px solid #dedede; }
.mtab { width: 81px; display: flex; align-items: center; justify-content: center; background: #e2e2e2; color: #8a8a8a; font-weight: 500; }
.mtab.on { background: #f1f1f1; color: #333; border-right: 1px solid #dedede; border-left: 1px solid #dedede; }
.mid-tools { height: 38px; display: flex; align-items: center; background: #f1f1f1; border-bottom: 1px solid #d8d8d8; color: #666; }
.mt { display: flex; align-items: center; white-space: nowrap; }
.mt svg { width: 22px; height: 22px; flex: none; margin-right: 4px; }
.t-add { margin-left: 7px; width: 112px; }
.t-add svg { width: 17px; height: 19px; margin-right: 5px; }
.t-split { width: 86px; }
.t-loc { width: 70px; margin-left: -1px; color: #4a4a4a; }
.t-del { color: #666; }
.t-del svg { width: 18px; height: 20px; margin-right: 8px; }
.thead { display: grid; grid-template-columns: 376px 44px 76px 44px; height: 31px; }
.th { display: flex; align-items: center; justify-content: center; background: #f1f1f1; border-left: 1px solid #dedede; color: #555; white-space: nowrap; }
.th.name { background: #7ab6f6; color: #fff; font-weight: 700; border: 0; }
.th.blank { background: #f7f7f7; border: 0; }
.tr { width: 496px; height: 26.250px; display: grid; grid-template-columns: 376px 44px 76px; border-bottom: 2px solid #e8e8e8; }
.tr.head { display: flex; align-items: center; padding-left: 4px; white-space: nowrap; }
.minus { width: 15px; height: 15px; margin-right: 8px; border: 1px solid #888; border-radius: 3px; position: relative; flex: none; background: #fff; }
.minus::after { content: ""; position: absolute; left: 4px; top: 6px; width: 5px; height: 1px; background: #444; }
.c { display: flex; align-items: center; white-space: nowrap; min-width: 0; }
.nm { position: relative; padding-left: 40px; }
.nm::before { content: ""; position: absolute; left: 11px; top: 0; bottom: -2px; width: 1px; background: #ccc; }
.nm::after { content: ""; position: absolute; left: 12px; top: 50%; width: 20px; height: 1px; background: #ccc; }
.nm.last::before { bottom: 50%; }
.lk { justify-content: center; border-left: 2px solid #e8e8e8; }
.lk svg { width: 14px; height: 18px; }
.fl { padding-left: 3px; border-left: 2px solid #e8e8e8; }
.tr.selected { background: #cfe6fd; height: 28px; }
.tr.selected .nm { outline: 2px solid #6d6d6d; outline-offset: -2px; }
.sb-up { position: absolute; left: 545px; top: 82px; width: 0; height: 0; border-left: 5px solid transparent; border-right: 5px solid transparent; border-bottom: 5px solid #333; }
.sb-thumb { position: absolute; left: 545px; top: 167px; width: 9px; height: 200px; border-radius: 5px; background: #d6d6d6; }

/* canvas */
.canvas { flex: 1; position: relative; background: #000; overflow: hidden; margin-left: 6px; }
.cad { position: absolute; left: 0; top: 0; }
.lbl text { font: 30px "Liberation Sans", sans-serif; fill: #0b7380; stroke: #000; stroke-width: 0.7px; }
.dim text { font: 28px "Liberation Sans", sans-serif; fill: #00d800; stroke: #000; stroke-width: 0.7px; }
.dim text.axis { font-size: 16px; stroke: none; }
.float { position: absolute; left: 7px; top: 8px; width: 154px; height: 144px; background: #1f5287; border: 1px solid #2b6cae; }
.float-head { height: 16px; background: #1b3f64; position: relative; color: #d8e2ec; }
.float-head span { position: absolute; right: 5px; top: -2px; font: 15px/18px "Liberation Sans", sans-serif; }
.fbtn { margin: 10px 8px 0; height: 30px; display: flex; align-items: center; justify-content: center; background: #205083; border: 1px solid #1a416b; border-radius: 3px; color: #dbe5ee; }
.float-head + .fbtn { margin-top: 8px; }
.fbtn.drop { position: relative; padding-right: 6px; }
.fbtn.drop .caret { position: absolute; right: 5px; top: 11px; }
.note { position: absolute; left: 256px; top: 55px; font-size: 37px; line-height: 48px; font-weight: 400; color: #f81ce8; white-space: nowrap; }

/* dialog */
.dialog { position: absolute; left: 413px; top: 248px; width: 340px; height: 339px; background: #fff; border: solid #434a52; border-width: 6px 6px 7px 7px; border-radius: 3px; }
.dlg-head { height: 15px; background: #d3d5d8; position: relative; }
.dlg-head .x { right: 6px; top: -1px; }
.dlg-title { height: 28px; padding-left: 11px; line-height: 25px; background: #efefef; border-bottom: 2px solid #dcdcdc; color: #777; font-weight: 500; }
.dlg-acts { height: 37px; display: flex; gap: 18px; align-items: center; padding: 0 0 2px 6px; background: #efefef; border-bottom: 2px solid #dcdcdc; color: #666; }
.lt { display: grid; grid-template-columns: 64px 44px 189px; height: 26.500px; width: 297px; border-bottom: 2px solid #e2e2e2; }
.lt > span { display: flex; align-items: center; justify-content: center; padding-bottom: 2px; border-right: 2px solid #e2e2e2; min-width: 0; white-space: nowrap; }
.lt > span.ln { justify-content: flex-start; padding-left: 5px; }
.lhead { width: 100%; background: #f0f0f0; color: #555; border: 0; height: 27px; }
.lhead > span { padding-bottom: 3px; }
.cb { width: 17px; height: 18px; border: 1.500px solid #888; border-radius: 3px; background: #fff; }
.cb.on { background: #8cbcff; border: 2px solid #a8a8a8; }
.tri { width: 8px; height: 14px; }
.handle { position: absolute; left: 754px; top: 328px; width: 6px; height: 127px; background: #5d646b; }
.handle::after { content: ""; position: absolute; left: 1px; top: 59px; border-top: 4px solid transparent; border-bottom: 4px solid transparent; border-right: 4px solid #c8ccd0; }

/* annotations */
.hl { position: absolute; border: solid #ff3535; }
.hl-scale { left: 104px; top: 58px; width: 112px; height: 39px; border-width: 5px; }
.hl-loc { left: 382px; top: 217px; width: 87px; height: 53px; border-width: 7px; }
.arrows { position: absolute; left: 0; top: 0; pointer-events: none; }

/* the reference is a slightly soft, resampled capture */
.app { filter: blur(0.35px); }
```
